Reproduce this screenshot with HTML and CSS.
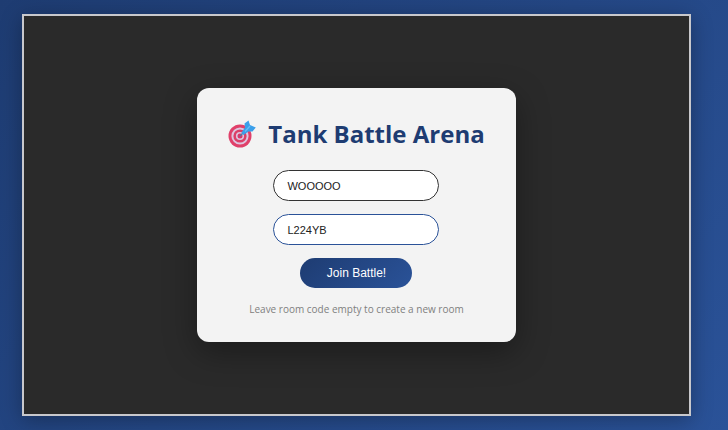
FILE: index.html
```html
<!DOCTYPE html>
<html lang="en">
<head>
    <meta charset="UTF-8">
    <meta name="viewport" content="width=device-width, initial-scale=1.0">
    <title>Tank Battle Arena</title>
    <link rel="stylesheet" href="styles.css">
</head>
<body>
    <main class="game-container">
        <form class="login-screen" id="loginForm">
            <h1>
                <svg class="target-icon" viewBox="0 0 28 28" aria-hidden="true">
                    <circle cx="12" cy="16" r="11.5" fill="#e0406a"/>
                    <circle cx="12" cy="16" r="8.600" fill="#dcc6df"/>
                    <circle cx="12" cy="16" r="6.6" fill="#dc3f68"/>
                    <circle cx="12" cy="16" r="4.100" fill="#dcc6df"/>
                    <circle cx="12" cy="16" r="2.5" fill="#d8386a"/>
                    <path d="M12 16 L19 9" stroke="#4d7fa8" stroke-width="1.4"/>
                    <path d="M13.500 12.500 L17 7.500 L16.500 3.500 L20.500 0.500 L22 5 L27.800 7.500 L24.500 11.500 L20.500 11.500 L15.500 15 Z" fill="#3b9fea"/>
                    <path d="M17 11.500 L22 6" stroke="#69bdf6" stroke-width="1.2"/>
                </svg>
                Tank Battle Arena
            </h1>
            <input type="text" id="playerName" class="name-input" value="WOOOOO" aria-label="Your name" autocomplete="off" spellcheck="false">
            <input type="text" id="roomCode" value="L224YB" aria-label="Room code" autocomplete="off" spellcheck="false">
            <button type="submit">Join Battle!</button>
            <p class="hint">Leave room code empty to create a new room</p>
        </form>
    </main>

    <script>
        const playerName = document.getElementById('playerName');

        // Start with the cursor at the end of the name
        playerName.focus();
        playerName.setSelectionRange(playerName.value.length, playerName.value.length);

        document.getElementById('loginForm').addEventListener('submit', (e) => {
            e.preventDefault();
        });
    </script>
</body>
</html>
```
FILE: styles.css
```css
* {
    box-sizing: border-box;
}
body {
    display: flex;
    min-height: 100vh;
    margin: 0;
    padding: 14px 37px 14px 22px;
    background: linear-gradient(135deg, #1e3c72, #2a5298);
    font-family: "Open Sans", "Noto Sans", sans-serif;
}
.game-container {
    flex: 1;
    display: flex;
    justify-content: center;
    align-items: center;
    background-color: #2a2a2a;
    border: 2px solid #c8c8cc;
    box-shadow: 0 4px 20px rgba(0, 0, 0, 0.3);
}
.login-screen {
    display: flex;
    flex-direction: column;
    align-items: center;
    padding: 28px 31px 26px;
    background-color: #f3f3f3;
    border-radius: 12px;
    box-shadow: 0 10px 32px rgba(0, 0, 0, 0.35);
}
.login-screen h1 {
    display: flex;
    align-items: center;
    gap: 12px;
    margin: 0 0 18px;
    color: #1e3c72;
    font-size: 24px;
    line-height: 36px;
    white-space: nowrap;
}
.target-icon {
    width: 28px;
    height: 28px;
}
.login-screen input {
    width: 166px;
    height: 31px;
    margin-bottom: 13px;
    padding: 0 13px;
    border: 1px solid #2a5298;
    border-radius: 16px;
    outline: none;
    background-color: #fff;
    color: #222;
    font-family: "Liberation Sans", Arial, sans-serif;
    font-size: 11px;
}
.login-screen .name-input {
    border-color: #333;
}
.login-screen button {
    width: 112px;
    height: 30px;
    padding: 0;
    border: none;
    border-radius: 15px;
    background: linear-gradient(135deg, #1e3c72, #2a5298);
    color: #fff;
    font-family: "Liberation Sans", Arial, sans-serif;
    font-size: 12px;
    cursor: pointer;
}
.hint {
    margin: 14px 0 0;
    color: #808080;
    font-size: 10px;
    line-height: 14px;
}
```
